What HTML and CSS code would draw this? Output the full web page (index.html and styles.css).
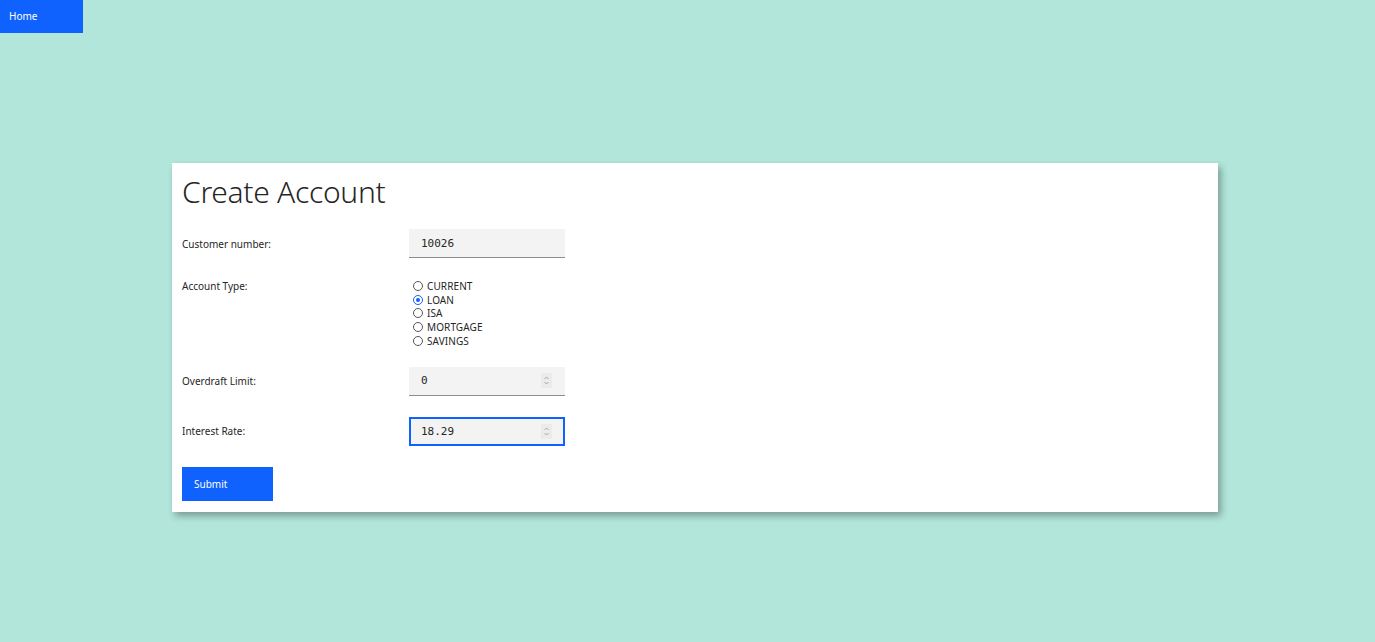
FILE: index.html
```html
<!DOCTYPE html>
<html>
<head>
<meta charset="utf-8">
<link rel="stylesheet" href="styles.css">
</head>
<body>
<nav class="topnav"><a class="home" href="#">Home</a></nav>
<main class="card">
  <h1 class="title">Create Account</h1>
  <div class="row row-center">
    <div class="label">Customer number:</div>
    <div class="field"><span class="val">10026</span></div>
  </div>
  <div class="row row-top">
    <div class="label label-top">Account Type:</div>
    <div class="radios">
      <div class="radio"><span class="dot"></span>CURRENT</div>
      <div class="radio"><span class="dot on"></span>LOAN</div>
      <div class="radio"><span class="dot"></span>ISA</div>
      <div class="radio"><span class="dot"></span>MORTGAGE</div>
      <div class="radio"><span class="dot"></span>SAVINGS</div>
    </div>
  </div>
  <div class="row row-center r3">
    <div class="label">Overdraft Limit:</div>
    <div class="field"><span class="val">0</span>
      <svg class="spin" width="11" height="15" viewBox="0 0 11 15"><rect width="11" height="15" fill="#ebebeb"/><path d="M3.5 6 L5.5 4 L7.5 6 M3.5 9 L5.5 11 L7.5 9" fill="none" stroke="#a0a0a0" stroke-width="0.9"/></svg>
    </div>
  </div>
  <div class="row row-center r4">
    <div class="label">Interest Rate:</div>
    <div class="field focus"><span class="val">18.29</span>
      <svg class="spin" width="11" height="15" viewBox="0 0 11 15"><rect width="11" height="15" fill="#ebebeb"/><path d="M3.5 6 L5.5 4 L7.5 6 M3.5 9 L5.5 11 L7.5 9" fill="none" stroke="#a0a0a0" stroke-width="0.9"/></svg>
    </div>
  </div>
  <button class="submit">Submit</button>
</main>
</body>
</html>
```
FILE: styles.css
```css
html, body {
  margin: 0;
  padding: 0;
  background: #b2e6da;
  font-family: "Noto Sans", "Liberation Sans", sans-serif;
  color: #161616;
}
body {
  min-height: 642px;
}
.topnav {
  height: 33px;
  display: flex;
}
.home {
  width: 83px;
  height: 33px;
  background: #0f62fe;
  color: #fff;
  text-decoration: none;
  font-size: 10px;
  display: flex;
  align-items: center;
  padding: 0 0 1px 9px;
  box-sizing: border-box;
}
.card {
  margin: 130px 0 0 172px;
  width: 1046px;
  height: 349px;
  background: #fff;
  box-sizing: border-box;
  padding: 10px 10px 0 10px;
  box-shadow: 3px 4px 7px rgba(0, 0, 0, 0.32);
}
.title {
  margin: 0;
  font-weight: 300;
  font-size: 30px;
  line-height: 38px;
  color: #262626;
  letter-spacing: -0.3px;
}
.row {
  display: flex;
}
.row-center { align-items: center; margin-top: 18px; }
.row-top { align-items: flex-start; margin-top: 21px; }
.r3 { margin-top: 19px; }
.r4 { margin-top: 21px; }
.label {
  width: 227px;
  font-size: 10px;
  color: #262626;
}
.field {
  width: 156px;
  height: 29px;
  box-sizing: border-box;
  background: #f3f3f3;
  border-bottom: 1px solid #8d8d8d;
  display: flex;
  align-items: center;
  justify-content: space-between;
  padding: 0 13px 0 12px;
}
.field.focus {
  border: 2px solid #0f62fe;
  padding: 0 11px 0 10px;
}
.val {
  font-family: "DejaVu Sans Mono", "Liberation Mono", monospace;
  font-size: 11px;
  color: #262626;
}
.spin { display: block; }
.radios {
  display: flex;
  flex-direction: column;
  margin-left: 4px;
}
.radio {
  display: flex;
  align-items: center;
  height: 13.75px;
  font-size: 10px;
  color: #262626;
  letter-spacing: 0.1px;
}
.dot {
  width: 10px;
  height: 10px;
  box-sizing: border-box;
  border: 1.3px solid #555;
  border-radius: 50%;
  margin-right: 4px;
  position: relative;
}
.dot.on {
  border-color: #0f62fe;
  border-width: 1.5px;
}
.dot.on::after {
  content: "";
  position: absolute;
  left: 50%;
  top: 50%;
  width: 4px;
  height: 4px;
  margin: -2px 0 0 -2px;
  border-radius: 50%;
  background: #0f62fe;
}
.submit {
  margin-top: 21px;
  width: 91px;
  height: 34px;
  background: #0f62fe;
  color: #fff;
  border: none;
  font-family: "Noto Sans", "Liberation Sans", sans-serif;
  font-size: 10px;
  text-align: left;
  padding: 0 0 0 12px;
  display: block;
}
```
